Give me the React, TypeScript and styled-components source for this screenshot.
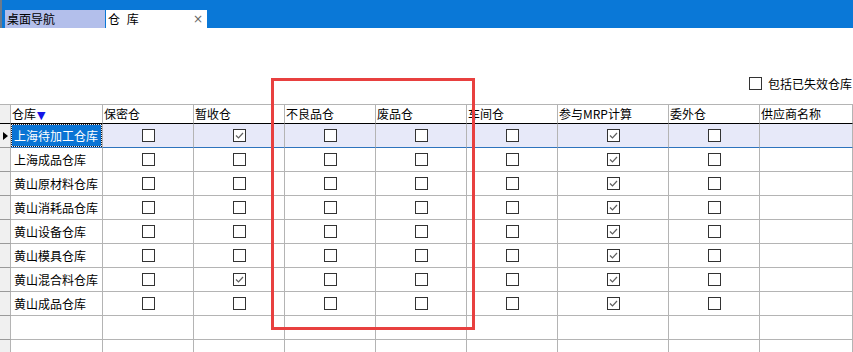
import styled, { createGlobalStyle } from "styled-components"

const GlobalStyle = createGlobalStyle`
    html, body {
        margin: 0;
        padding: 0;
        background: #ffffff;
        font-family: "Noto Sans CJK SC", "Noto Sans", sans-serif;
        font-size: 12px;
        color: #000;
        overflow: hidden;
    }
`

const Page = styled.div`
    position: relative;
    width: 853px;
    height: 352px;
    overflow: hidden;
`

const TabBar = styled.div`
    display: flex;
    align-items: flex-end;
    height: 28px;
    padding-left: 3px;
    background: #0a78d7;
    border-left: 2px solid #6c7a8c;
    box-sizing: border-box;
`

const Tab = styled.div<{ $active?: boolean }>`
    display: flex;
    align-items: center;
    justify-content: space-between;
    width: ${p => (p.$active ? "101px" : "100px")};
    height: 18px;
    margin-right: 1px;
    padding: 0 4px 0 2px;
    box-sizing: border-box;
    background: ${p => (p.$active ? "#ffffff" : "#b3bfeb")};
    line-height: 18px;
    white-space: pre;
    word-spacing: 4px;
`

const TabClose = styled.span`
    color: #666;
    font-family: "DejaVu Sans", sans-serif;
    font-size: 12px;
`

const OptionsBar = styled.div`
    display: flex;
    justify-content: flex-end;
    align-items: center;
    height: 76px;
    padding: 34px 1px 0 0;
    box-sizing: border-box;
`

const OptionLabel = styled.label`
    display: flex;
    align-items: center;
    gap: 6px;
    white-space: nowrap;
`

const Grid = styled.div`
    display: grid;
    grid-template-columns: 11px 92px 91px 91px 91px 91px 91px 111px 91px 1fr;
    border-top: 1px solid #b4b4b4;
`

const HeadCell = styled.div<{ $corner?: boolean }>`
    height: 18px;
    line-height: 18px;
    padding-left: 1px;
    background: ${p => (p.$corner ? "#f0f0f0" : "#ffffff")};
    border-right: 1px solid #b4b4b4;
    border-bottom: 1px solid #000;
    white-space: nowrap;
`

const SortMark = styled.span`
    color: #1414e6;
    font-family: "DejaVu Sans", sans-serif;
    font-size: 11px;
    margin-left: 1px;
`

const Cell = styled.div<{ $current?: boolean; $rowHead?: boolean }>`
    display: flex;
    align-items: center;
    height: 23px;
    background: ${p => (p.$rowHead ? "#f0f0f0" : p.$current ? "#e7e9f9" : "#ffffff")};
    border-right: 1px solid #b4b4b4;
    border-bottom: 1px solid ${p => (p.$rowHead ? "#9a9a9a" : p.$current ? "#2d73bd" : "#b4b4b4")};
    white-space: nowrap;
`

const CenterCell = styled(Cell)`
    justify-content: center;
`

const NameText = styled.span<{ $selected?: boolean }>`
    display: block;
    margin-left: 1px;
    padding: 0 2px;
    width: 85px;
    height: 21px;
    line-height: 21px;
    background: ${p => (p.$selected ? "#0a74d4" : "transparent")};
    color: ${p => (p.$selected ? "#ffffff" : "#000")};
    outline: ${p => (p.$selected ? "1px dotted #1a1a1a" : "none")};
`

const RowPointer = styled.span`
    margin-left: 3px;
    width: 0;
    height: 0;
    border-top: 4px solid transparent;
    border-bottom: 4px solid transparent;
    border-left: 5px solid #000;
`

const Box = styled.span`
    display: inline-flex;
    align-items: center;
    justify-content: center;
    width: 11px;
    height: 11px;
    border: 1px solid #333;
    background: #fff;
`

const Highlight = styled.div`
    position: absolute;
    left: 271px;
    top: 78px;
    width: 198px;
    height: 246px;
    border: 3px solid #e8403f;
    pointer-events: none;
`

function CheckBox({ checked }: { checked?: boolean }) {
    return (
        <Box>
            {checked && (
                <svg width="9" height="9" viewBox="0 0 9 9">
                    <path d="M1 4.5 L3.5 7 L8 2" fill="none" stroke="#606060" strokeWidth="1.2" />
                </svg>
            )}
        </Box>
    )
}

const columns = ["保密仓", "暂收仓", "不良品仓", "废品仓", "车间仓", "参与MRP计算", "委外仓"]

// each row: name + flags for the seven checkbox columns
const rows: { name: string; flags: boolean[] }[] = [
    { name: "上海待加工仓库", flags: [false, true, false, false, false, true, false] },
    { name: "上海成品仓库", flags: [false, false, false, false, false, true, false] },
    { name: "黄山原材料仓库", flags: [false, false, false, false, false, true, false] },
    { name: "黄山消耗品仓库", flags: [false, false, false, false, false, true, false] },
    { name: "黄山设备仓库", flags: [false, false, false, false, false, true, false] },
    { name: "黄山模具仓库", flags: [false, false, false, false, false, true, false] },
    { name: "黄山混合料仓库", flags: [false, true, false, false, false, true, false] },
    { name: "黄山成品仓库", flags: [false, false, false, false, false, true, false] },
]

export default function App() {
    return (
        <Page>
            <GlobalStyle />
            <TabBar>
                <Tab>桌面导航</Tab>
                <Tab $active>
                    <span>仓 库</span>
                    <TabClose>×</TabClose>
                </Tab>
            </TabBar>

            <OptionsBar>
                <OptionLabel>
                    <CheckBox />
                    包括已失效仓库
                </OptionLabel>
            </OptionsBar>

            <Grid>
                <HeadCell $corner />
                <HeadCell>
                    仓库<SortMark>▼</SortMark>
                </HeadCell>
                {columns.map(c => (
                    <HeadCell key={c}>{c}</HeadCell>
                ))}
                <HeadCell>供应商名称</HeadCell>

                {rows.map((r, i) => {
                    const current = i === 0
                    return [
                        <Cell key={`h${i}`} $rowHead>{current && <RowPointer />}</Cell>,
                        <Cell key={`n${i}`} $current={current}>
                            <NameText $selected={current}>{r.name}</NameText>
                        </Cell>,
                        ...r.flags.map((f, j) => (
                            <CenterCell key={`c${i}-${j}`} $current={current}>
                                <CheckBox checked={f} />
                            </CenterCell>
                        )),
                        <Cell key={`s${i}`} $current={current} />,
                    ]
                })}

                {[0, 1].map(i =>
                    Array.from({ length: 10 }, (_, j) => <Cell key={`e${i}-${j}`} $rowHead={j === 0} />)
                )}
            </Grid>

            <Highlight />
        </Page>
    )
}
